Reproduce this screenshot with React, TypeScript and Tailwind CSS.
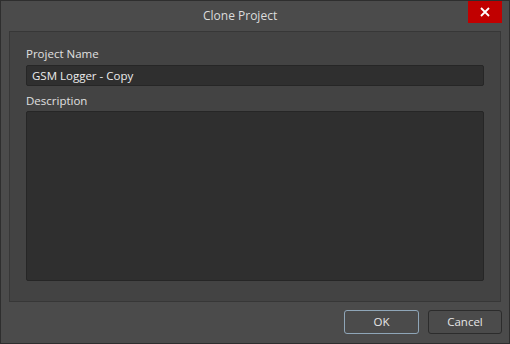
import React from "react";

export default function App() {
  return (
    <div
      className="w-[510px] h-[344px] bg-[#4b4b4b] border border-[#2e2e2e] flex flex-col text-[#e2e2e2]"
      style={{ fontFamily: '"Open Sans", "Noto Sans", sans-serif' }}
    >
      {/* title bar */}
      <div className="relative h-[30px] flex items-center pl-[202px] bg-[#4b4b4b]">
        <span className="text-[12px] text-[#dcdcdc] -mt-[1px]">Clone Project</span>
        <button className="absolute right-[7px] top-0 w-[34px] h-[22px] bg-[#c10000] flex items-center justify-center">
          <svg width="10" height="10" viewBox="0 0 10 10">
            <path d="M1 1L9 9M9 1L1 9" stroke="#ffffff" strokeWidth="1.8" />
          </svg>
        </button>
      </div>

      {/* content panel */}
      <div className="mx-[8px] h-[271px] bg-[#434343] border border-[#373737] px-[16px] pt-[14px] flex flex-col">
        <label className="text-[11.5px] leading-[16px] text-[#e0e0e0]">Project Name</label>
        <div className="mt-[3px] h-[21px] rounded-[2px] bg-[#2f2f2f] border border-[#262626] flex items-center px-[5px] text-[11.5px] text-[#ececec]">
          GSM Logger - Copy
        </div>
        <label className="mt-[7px] text-[11.5px] leading-[16px] text-[#e0e0e0]">Description</label>
        <div className="mt-[2px] h-[170px] rounded-[2px] bg-[#2f2f2f] border border-[#262626]" />
      </div>

      {/* footer */}
      <div className="flex justify-end gap-[9px] pr-[7px] pt-[8px]">
        <button className="w-[75px] h-[24px] rounded-[3px] bg-[#4b4b4b] border border-[#8fa6b8] text-[11.5px] text-[#e6e6e6]">
          OK
        </button>
        <button className="w-[74px] h-[24px] rounded-[3px] bg-[#4b4b4b] border border-[#2c2c2c] text-[11.5px] text-[#e6e6e6]">
          Cancel
        </button>
      </div>
    </div>
  );
}
